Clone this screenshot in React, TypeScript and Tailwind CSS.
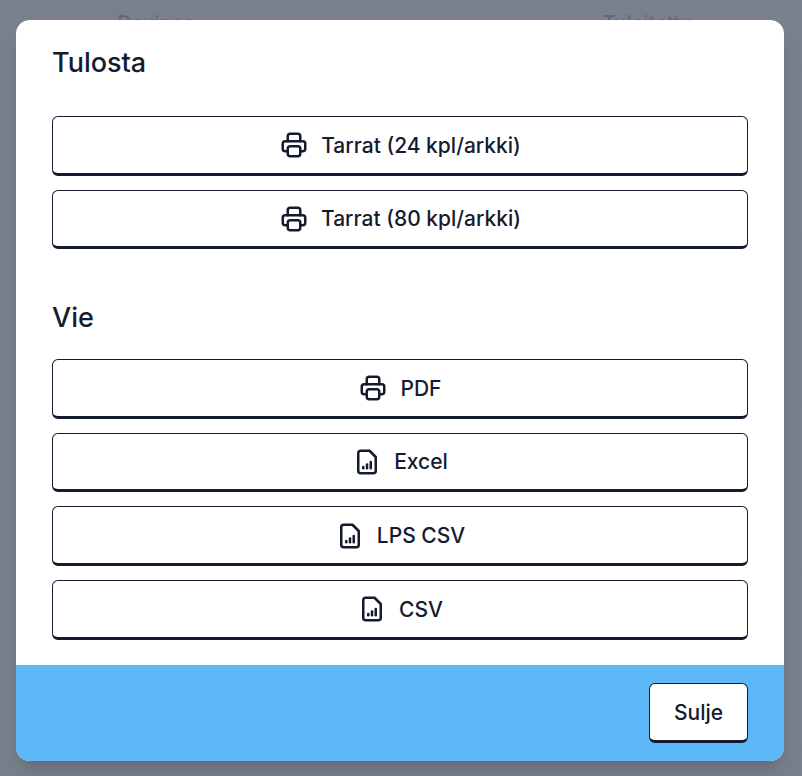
import React from 'react';

const PrinterIcon = () => (
  <svg width="30" height="30" viewBox="0 0 24 24" fill="none" stroke="currentColor" strokeWidth="2" strokeLinecap="round" strokeLinejoin="round">
    <path d="M17 17h2a2 2 0 0 0 2-2v-4a2 2 0 0 0-2-2H5a2 2 0 0 0-2 2v4a2 2 0 0 0 2 2h2" />
    <path d="M17 9V5a2 2 0 0 0-2-2H9a2 2 0 0 0-2 2v4" />
    <rect x="7" y="13" width="10" height="8" rx="2" />
  </svg>
);

const FileChartIcon = () => (
  <svg width="30" height="30" viewBox="0 0 24 24" fill="none" stroke="currentColor" strokeWidth="2" strokeLinecap="round" strokeLinejoin="round">
    <path d="M14 3H7a2 2 0 0 0-2 2v14a2 2 0 0 0 2 2h10a2 2 0 0 0 2-2V8z" />
    <path d="M9 17v-1" />
    <path d="M12 17v-3" />
    <path d="M15 17v-5" />
  </svg>
);

const exportRows = [
  { label: 'PDF', icon: <PrinterIcon /> },
  { label: 'Excel', icon: <FileChartIcon /> },
  { label: 'LPS CSV', icon: <FileChartIcon /> },
  { label: 'CSV', icon: <FileChartIcon /> },
];

const ActionButton = ({ label, icon }: { label: string; icon: React.ReactNode }) => (
  <button className="flex h-[59.6px] w-full items-center justify-center gap-[12px] rounded-[6px] border border-[#151b2e] border-b-[3px] bg-white pt-[1px] text-[21px] font-medium text-[#151b2e]">
    {icon}
    <span>{label}</span>
  </button>
);

export default function App() {
  return (
    <div className="relative h-[776px] w-[802px] overflow-hidden bg-[#f3f4f6] font-['Inter',sans-serif]">
      {/* Page behind the dialog */}
      <div className="flex h-[65px] items-start justify-between border-b border-[#d1d5db] pl-[117px] pr-[110px] pt-[8px] text-[20px] font-medium text-[#111827]">
        <span>Devinco</span>
        <span>Tuloitettu</span>
      </div>
      <div className="h-[170px] border-b border-[#d1d5db]" />
      <div className="h-[170px] border-b border-[#d1d5db]" />
      <div className="h-[170px] border-b border-[#d1d5db]" />
      <div className="h-[170px] border-b border-[#d1d5db]" />

      {/* Overlay */}
      <div className="absolute inset-0 bg-[#6b7280]/90" />

      {/* Dialog */}
      <div className="absolute left-[16px] top-[20px] w-[768px] overflow-hidden rounded-[14px] bg-white shadow-xl">
        <div className="px-[36px] pb-[25.6px] pt-[25px]">
          <h2 className="text-[27px] font-medium leading-[36px] text-[#151b2e]">Tulosta</h2>
          <div className="mt-[35px] flex flex-col gap-[14px]">
            <ActionButton label="Tarrat (24 kpl/arkki)" icon={<PrinterIcon />} />
            <ActionButton label="Tarrat (80 kpl/arkki)" icon={<PrinterIcon />} />
          </div>
          <h2 className="mt-[51px] text-[27px] font-medium leading-[36px] text-[#151b2e]">Vie</h2>
          <div className="mt-[23px] flex flex-col gap-[14px]">
            {exportRows.map((row) => (
              <ActionButton key={row.label} label={row.label} icon={row.icon} />
            ))}
          </div>
        </div>
        <div className="flex h-[96px] items-center justify-end bg-[#5cb8f6] px-[36px]">
          <button className="h-[60px] w-[99px] rounded-[6px] border border-[#151b2e] border-b-[3px] bg-white pt-[1px] text-[21px] font-medium text-[#151b2e]">
            Sulje
          </button>
        </div>
      </div>
    </div>
  );
}
